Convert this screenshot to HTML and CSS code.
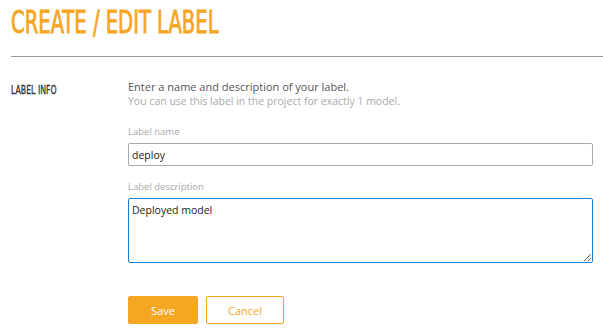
FILE: index.html
```html
<!DOCTYPE html>
<html lang="en">
  <head>
    <meta charset="UTF-8" />
    <title>Create / Edit Label</title>
    <link rel="stylesheet" href="styles.css">
  </head>
  <body>
    <div class="page">
      <div class="header">
        <h1 class="title">CREATE / EDIT LABEL</h1>
      </div>

      <div class="section">
        <div class="section-name">LABEL INFO</div>
        <div class="section-body">
          <p class="intro">Enter a name and description of your label.</p>
          <p class="hint">You can use this label in the project for exactly 1 model.</p>

          <label class="field-label" for="label-name">Label name</label>
          <input class="field" id="label-name" type="text" value="deploy" />

          <label class="field-label field-label-area" for="label-desc">Label description</label>
          <textarea class="field field-area" id="label-desc">Deployed model</textarea>

          <div class="actions">
            <button class="btn btn-primary">Save</button>
            <button class="btn btn-secondary">Cancel</button>
          </div>
        </div>
      </div>
    </div>
  </body>
</html>
```

FILE: styles.css
```css
html {
  font-family: "Open Sans", sans-serif;
}
body {
  margin: 0;
  background: #fff;
}
.header {
  border-bottom: 1px solid #999;
  margin-left: 11px;
  height: 56px;
}
.title {
  margin: 0;
  padding-top: 4px;
  font-family: "DejaVu Sans Condensed", sans-serif;
  font-weight: normal;
  font-size: 32px;
  line-height: 36px;
  color: #f6a623;
  -webkit-text-stroke: 0.9px #f6a623;
  transform: scaleX(0.68);
  transform-origin: left;
  white-space: nowrap;
}
.section {
  display: grid;
  grid-template-columns: 117px 465px;
  padding: 22px 11px 0 11px;
}
.section-name {
  font-family: "DejaVu Sans Condensed", sans-serif;
  font-size: 12px;
  color: #333;
  -webkit-text-stroke: 0.3px #333;
  padding-top: 4px;
  transform: scaleX(0.72);
  transform-origin: left;
  white-space: nowrap;
}
.section-body {
  display: flex;
  flex-direction: column;
}
.intro {
  margin: 0;
  font-size: 11px;
  line-height: 15px;
  color: #555;
}
.hint {
  margin: 0;
  font-size: 10.5px;
  line-height: 15px;
  color: #aaa;
}
.field-label {
  font-size: 9.5px;
  line-height: 14px;
  color: #aaa;
  margin-top: 16px;
  margin-bottom: 4px;
}
.field-label-area {
  margin-top: 14px;
}
.field {
  box-sizing: border-box;
  width: 465px;
  height: 23px;
  margin: 0;
  padding: 2px 3px;
  font-family: "Open Sans", sans-serif;
  font-size: 10.5px;
  color: #222;
  border: 1px solid #a9a9a9;
  border-radius: 2px;
  outline: none;
}
.field-area {
  height: 65px;
  padding: 4px 3px;
  border: 1px solid #1a7fd3;
  resize: vertical;
}
.actions {
  display: flex;
  gap: 8px;
  margin-top: 33px;
}
.btn {
  box-sizing: border-box;
  height: 28px;
  font-family: "Open Sans", sans-serif;
  font-size: 11px;
  border-radius: 2px;
  cursor: pointer;
}
.btn-primary {
  width: 70px;
  background: #f5a623;
  border: 1px solid #f5a623;
  color: #fff;
}
.btn-secondary {
  width: 78px;
  background: #fff;
  border: 1px solid #f5a623;
  color: #f5a623;
}
```
